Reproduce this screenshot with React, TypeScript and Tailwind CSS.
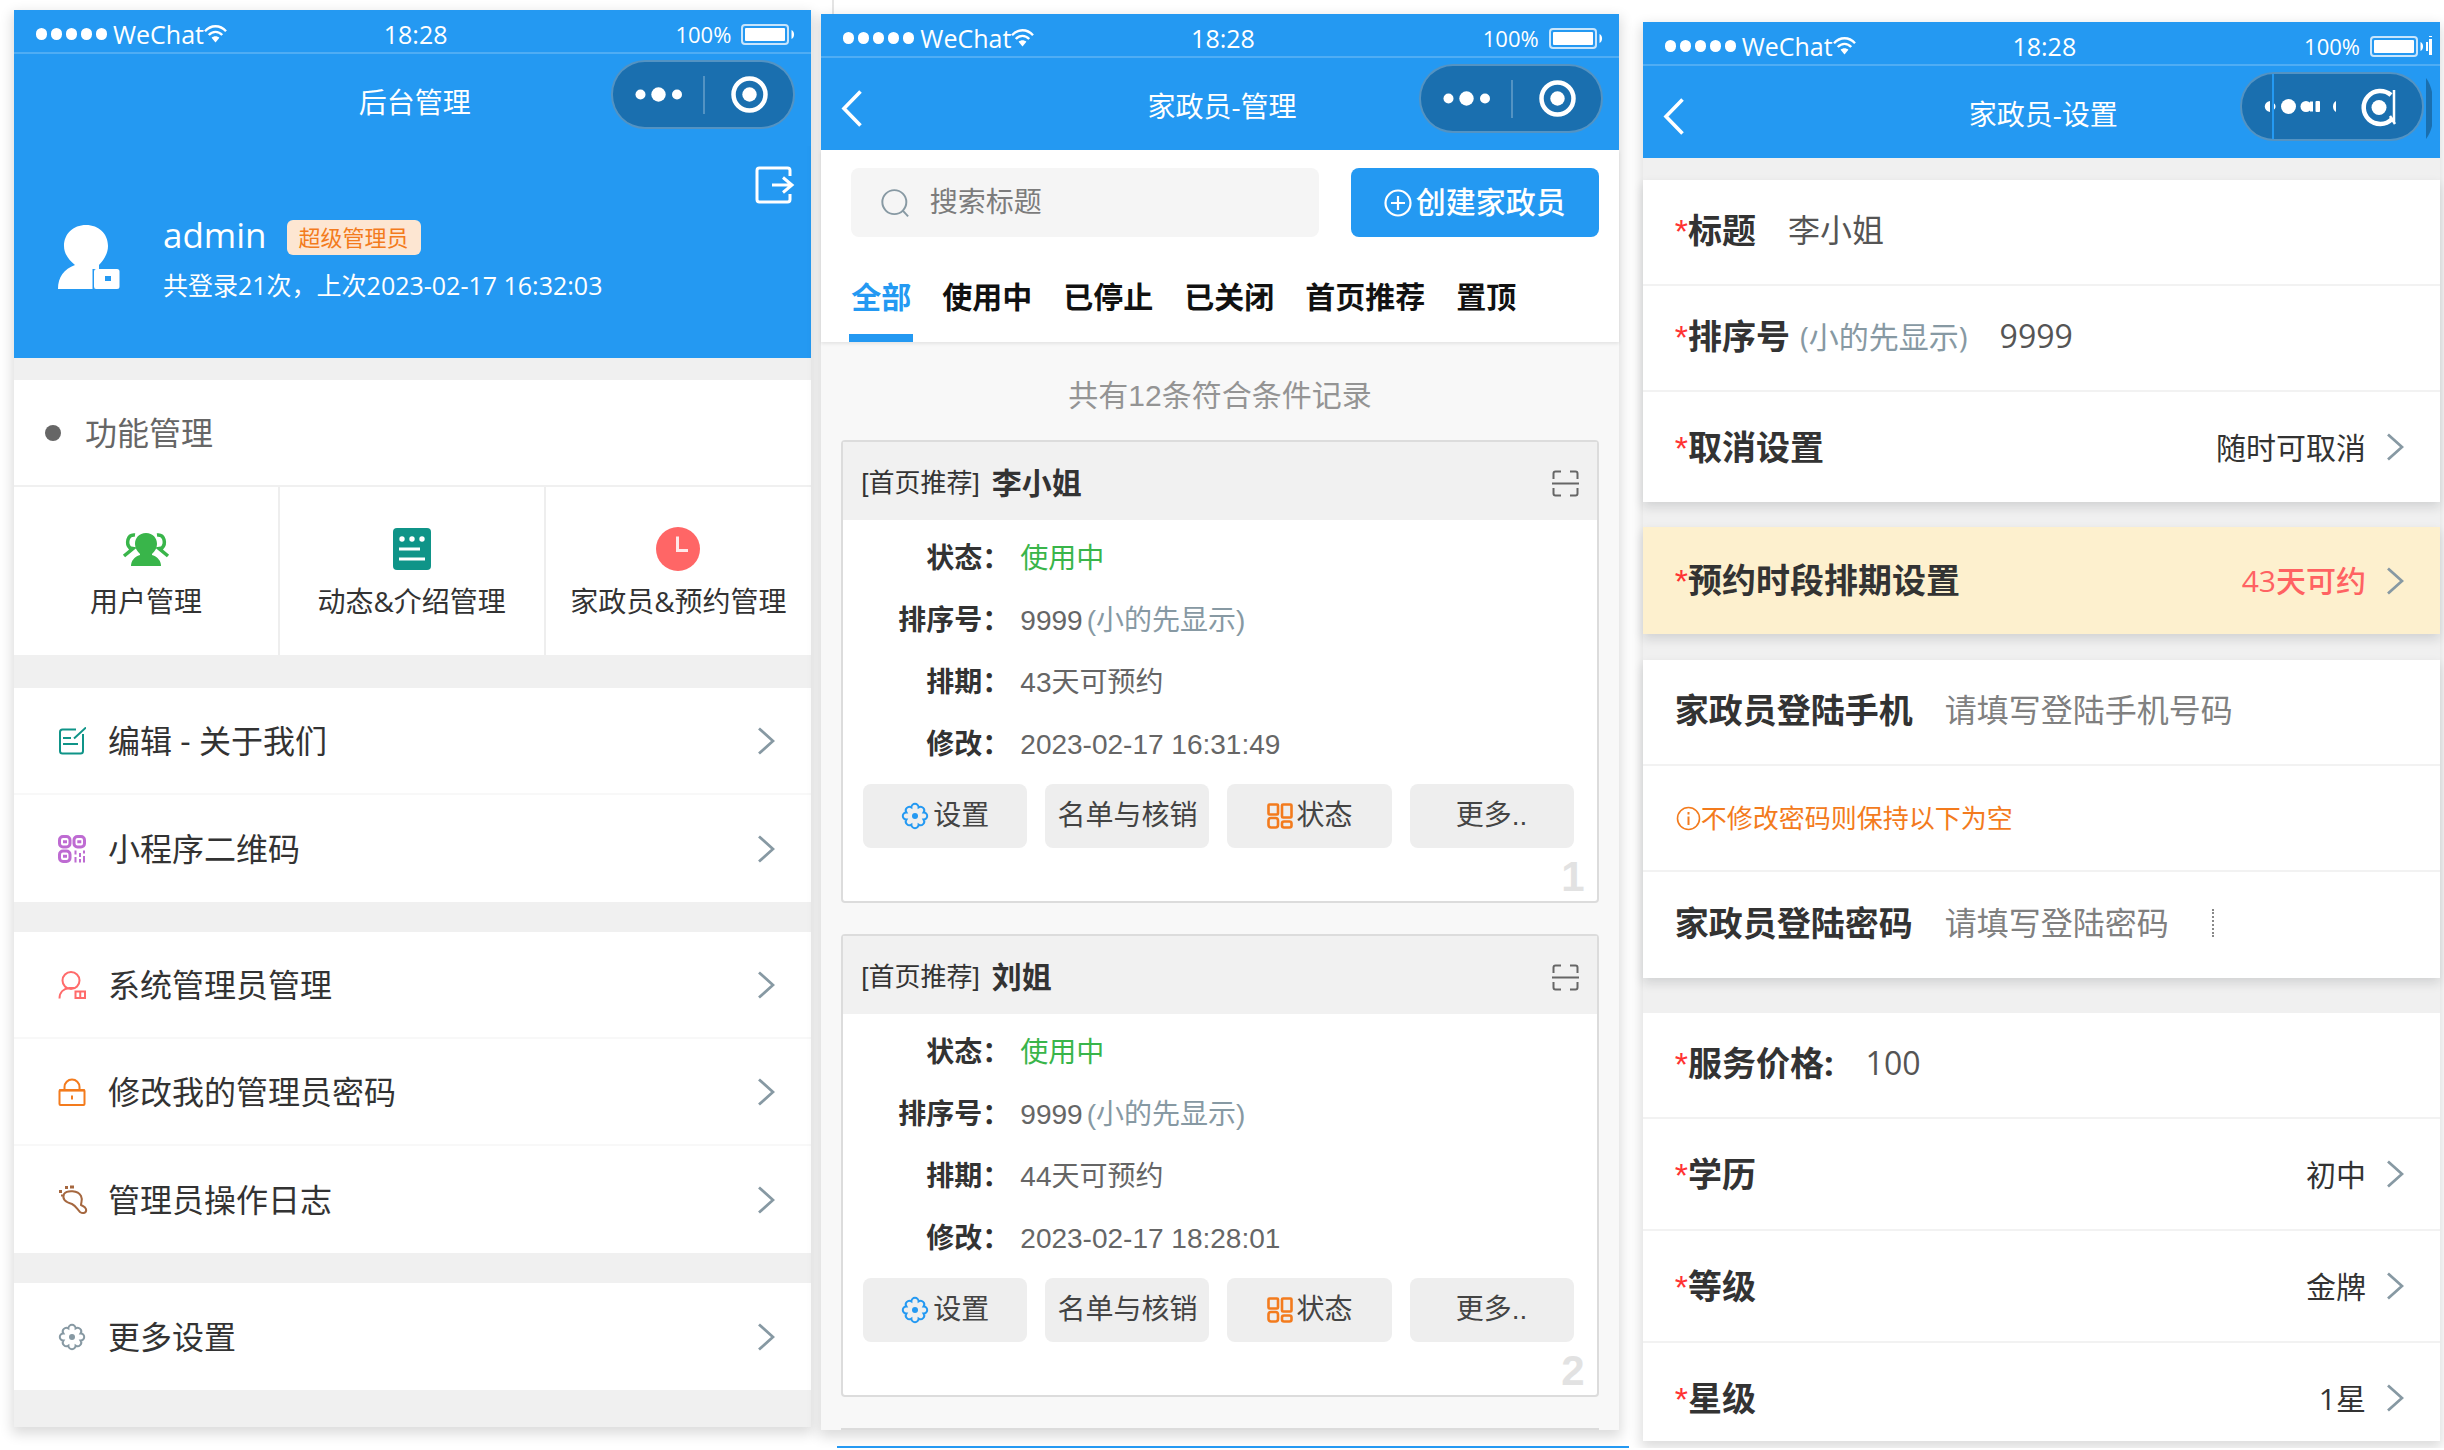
import { FC, ReactNode } from 'react'
import clsx from 'clsx'

const UI_FONT = `font-['Open_Sans','Noto_Sans_CJK_SC',sans-serif]`
const LIST_FONT = `font-['Liberation_Sans','Noto_Sans_CJK_SC',sans-serif]`

/* ---------- icons ---------- */

interface IIconProps {
  className?: string
}

const WifiIcon: FC = () => (
  <svg className="h-[18px] w-[23px]" viewBox="0 0 23 18" fill="none" stroke="currentColor" strokeWidth="2.4">
    <path d="M1 6.2C7-.4 16-.4 22 6.2" />
    <path d="M4.8 10C8.6 5.8 14.4 5.8 18.2 10" />
    <path d="M11.5 17.5 7.6 12.8c2.2-2 5.6-2 7.8 0z" fill="currentColor" stroke="none" />
  </svg>
)

const BatteryIcon: FC = () => (
  <svg className="h-[21px] w-[54px]" viewBox="0 0 54 21">
    <rect x="1" y="1" width="46" height="19" rx="3" fill="none" stroke="currentColor" strokeOpacity=".75" strokeWidth="2" />
    <rect x="4" y="4" width="40" height="13" rx="1" fill="currentColor" />
    <path d="M50.5 6c3.4 1 3.4 8 0 9z" fill="currentColor" />
  </svg>
)

const ChevronRight: FC = () => (
  <svg className="h-7 w-[18px] shrink-0 text-[#8799a3]" viewBox="0 0 18 28" fill="none" stroke="currentColor" strokeWidth="2.8">
    <path d="M2 1.5 16 14 2 26.5" />
  </svg>
)

const BackIcon: FC = () => (
  <svg className="h-[37px] w-[21px]" viewBox="0 0 21 37" fill="none" stroke="currentColor" strokeWidth="3.6">
    <path d="M19.5 1.5 3 18.5l16.5 17" />
  </svg>
)

const ExitIcon: FC = () => (
  <svg className="h-[38px] w-10" viewBox="0 0 40 38" fill="none" stroke="currentColor" strokeWidth="3">
    <path d="M35 10V4.5Q35 2 32.5 2h-28Q2 2 2 4.5v29Q2 36 4.5 36h28q2.5 0 2.5-2.500V28" />
    <path d="M17 19h20M28 11.5 37 19l-9 7.5" />
  </svg>
)

const AvatarIcon: FC = () => (
  <svg className="h-16 w-[63px]" viewBox="0 0 63 64" fill="currentColor">
    <path d="M29 0c13 0 22 9 22 21 0 8-5 15-9 19v4h-6.5v20H1c0-12 6-20 17-24C12 35 7 29 7 21 7 9 16 0 29 0z" />
    <path fillRule="evenodd" d="M39 44h21q2.5 0 2.5 2.5v15Q62.5 64 60 64H39q-2 0-2-2.500v-15q0-2.500 2-2.500zm9 7v5h6v-5z" />
  </svg>
)

const GearIcon: FC<IIconProps> = ({ className }) => (
  <svg className={className} viewBox="0 0 28 28" fill="none" stroke="currentColor" strokeWidth="2">
    <path d="M22.6 17.6A3.6 3.6 0 0 1 17.6 22.6 3.6 3.6 0 0 1 10.4 22.6 3.6 3.6 0 0 1 5.4 17.6 3.6 3.6 0 0 1 5.4 10.4 3.6 3.6 0 0 1 10.4 5.4 3.6 3.6 0 0 1 17.6 5.4 3.6 3.6 0 0 1 22.6 10.4 3.6 3.6 0 0 1 22.6 17.6z" />
    <circle cx="14" cy="14" r="3" fill="currentColor" stroke="none" />
  </svg>
)

const GridIcon: FC = () => (
  <svg className="h-[26px] w-[26px] text-[#f37b1d]" viewBox="0 0 26 26" fill="none" stroke="currentColor" strokeWidth="2.6">
    <rect x="1.5" y="1.5" width="9.5" height="10" rx="1" />
    <rect x="15" y="1.5" width="9.5" height="13" rx="1" />
    <rect x="1.5" y="15" width="9.5" height="9.5" rx="2.5" />
    <rect x="15" y="18.5" width="9.5" height="6" rx="2" />
  </svg>
)

const ScanIcon: FC = () => (
  <svg className="h-[27px] w-[27px] text-[#666]" viewBox="0 0 27 27" fill="none" stroke="currentColor" strokeWidth="2">
    <path d="M1.5 9V3.5q0-2 2-2H9M18 1.5h5.5q2 0 2 2V9M1.5 18v5.5q0 2 2 2H9M18 25.5h5.5q2 0 2-2V18M0 13.5h27" />
  </svg>
)

const SearchIcon: FC = () => (
  <svg className="h-8 w-8 text-[#8799a3]" viewBox="0 0 32 32" fill="none" stroke="currentColor" strokeWidth="2.2">
    <circle cx="15" cy="15" r="13.5" />
    <path d="m24.5 24.5 6 6.5" />
  </svg>
)

const PlusCircleIcon: FC = () => (
  <svg className="h-7 w-7" viewBox="0 0 28 28" fill="none" stroke="currentColor" strokeWidth="2.2">
    <circle cx="14" cy="14" r="12.5" />
    <path d="M14 7v14M7 14h14" />
  </svg>
)

const InfoIcon: FC = () => (
  <svg className="h-[25px] w-[25px]" viewBox="0 0 25 25" fill="none" stroke="currentColor" strokeWidth="1.6">
    <circle cx="12.5" cy="12.5" r="11" />
    <path d="M12.5 10.5V19M12.5 6v2.5" strokeWidth="2" />
  </svg>
)

const UsersIcon: FC = () => (
  <svg className="h-11 w-12 text-[#39b54a]" viewBox="0 0 48 44" fill="none" stroke="currentColor" strokeWidth="3.5">
    <path d="M24 6c7 0 11 5 11 11 0 4-2 7-5 10v1c6 2 9 6 9 11H9c0-5 3-9 9-11v-1c-3-3-5-6-5-10 0-6 4-11 11-11z" fill="currentColor" stroke="none" />
    <path d="M13 8C5 7 4 17 8 21l3 .5L2 29M35 8c8-1 9 9 5 13l-3 .5L46 29" />
  </svg>
)

const FormIcon: FC = () => (
  <svg className="h-11 w-10" viewBox="0 0 40 44">
    <rect x="1" y="1" width="38" height="42" rx="4" fill="#0f9488" />
    <g fill="#fff">
      <circle cx="10" cy="12" r="2.7" />
      <circle cx="20" cy="12" r="2.7" />
      <circle cx="30" cy="12" r="2.7" />
      <rect x="7" y="20.5" width="21" height="3" />
      <rect x="7" y="30.5" width="26" height="3" />
    </g>
  </svg>
)

const ClockIcon: FC = () => (
  <svg className="h-11 w-11" viewBox="0 0 44 44">
    <circle cx="22" cy="22" r="22" fill="#ff6666" />
    <path d="M21.5 9.5V23.5H32" fill="none" stroke="#fff" strokeOpacity=".85" strokeWidth="3" />
  </svg>
)

const EditIcon: FC = () => (
  <svg className="h-7 w-7 text-[#0f9488]" viewBox="0 0 28 28" fill="none" stroke="currentColor" strokeWidth="2">
    <path d="M18 2.5H4.5Q2 2.5 2 5v19q0 2.5 2.5 2.500h18q2.500 0 2.500-2.500V7M5 11h8M5 17h15M16 11.5 28 .5" />
  </svg>
)

const QrIcon: FC = () => (
  <svg className="h-7 w-7 text-[#a32cbf]" viewBox="0 0 28 28" fill="none" stroke="currentColor" strokeOpacity=".7" strokeWidth="3">
    <rect x="1.5" y="1.5" width="10.5" height="10.5" rx="3.5" />
    <rect x="16" y="1.5" width="10.5" height="10.5" rx="3.5" />
    <rect x="1.5" y="16" width="10.5" height="10.5" rx="3.5" />
    <path d="M5 6.75h4M19.300 6.75h4M5 21.25h4" />
    <path d="M17.5 15.5v4M17.5 22v5.5M22 18v4M22 24v3.5M26 15.5v3M26 21v6.5" strokeWidth="2" />
  </svg>
)

const AdminIcon: FC = () => (
  <svg className="h-7 w-7 text-[#ff6b6b]" viewBox="0 0 28 28" fill="none" stroke="currentColor" strokeWidth="2">
    <circle cx="13" cy="9.5" r="8.5" />
    <path d="M1.500 27.5c0-6 4-10 10-10.500h5" />
    <rect x="17.5" y="20.5" width="9.5" height="6.5" />
    <path d="M22.25 20.5V27" />
  </svg>
)

const LockIcon: FC = () => (
  <svg className="h-7 w-7 text-[#f37b1d]" viewBox="0 0 28 28" fill="none" stroke="currentColor" strokeWidth="2">
    <rect x="1.5" y="12" width="25" height="15" rx="1" />
    <path d="M6.5 12V9a7.5 7.5 0 0 1 15 0v3M14 17.5v4" />
    <path d="M1 12.5h26" strokeWidth="3" strokeOpacity=".6" />
  </svg>
)

const FootprintIcon: FC = () => (
  <svg className="h-[30px] w-[30px] text-[#a5673f]" viewBox="0 0 30 30" fill="none" stroke="currentColor" strokeWidth="2">
    <path d="M6 9c3-4 14-4 17 2 2 4 0 6 0 9 1 1 4 1 5 4 1 4-3 5-6 3-3-3-4-6-8-8C7 17 4 14 6 9z" />
    <path d="M1 6.5h3M4.5 9.5v2M7 2.5h3M12 2h4" strokeWidth="3" />
  </svg>
)

/* ---------- phone chrome ---------- */

const Capsule: FC = () => (
  <button
    type="button"
    aria-label="更多"
    className="mt-1.5 h-[69px] w-[184px] justify-self-end rounded-[34px] border-2 border-white/25 bg-[#1a6faf]"
  >
    <svg className="h-[65px] w-[180px]" viewBox="0 0 180 65" fill="#fff">
      <circle cx="27.5" cy="32.5" r="5" />
      <circle cx="45.5" cy="32.5" r="7.2" />
      <circle cx="64" cy="32.5" r="5" />
      <rect x="90" y="14" width="2" height="38" fillOpacity=".25" />
      <circle cx="136.500" cy="32.5" r="16" fill="none" stroke="#fff" strokeWidth="4.5" />
      <circle cx="136.500" cy="32.5" r="7.2" />
    </svg>
  </button>
)

// The settings page shows the capsule with its seams visible
const SeamedCapsule: FC = () => (
  <button
    type="button"
    aria-label="更多"
    className="mt-1.5 h-[69px] w-[184px] justify-self-end rounded-[34px] border-2 border-white/25 bg-[#1a6faf]"
  >
    <svg className="h-[65px] w-[180px]" viewBox="0 0 180 65" fill="#fff">
      <rect x="30" y="0" width="2" height="65" fill="#2499f2" />
      <path d="M28 27v11c-7-1-7-10 0-11zM32 29.5c2 1 2 5 0 6z" />
      <circle cx="46.5" cy="32.5" r="7.5" />
      <circle cx="64" cy="32.5" r="5.5" />
      <rect x="68" y="27.500" width="3" height="10" />
      <rect x="73.5" y="27" width="4.500" height="11" rx="1" />
      <path d="M94 27v11c-4-2-4-9 0-11z" />
      <path d="M149 21a16.500 16.500 0 1 0 1 24" fill="none" stroke="#fff" strokeWidth="4.5" />
      <path d="M152 16v32M148 42l5 8" fill="none" stroke="#fff" strokeWidth="2.5" />
      <circle cx="137" cy="33.5" r="7.5" />
    </svg>
  </button>
)

interface IPhoneHeaderProps {
  title: string
  back?: boolean
  seamed?: boolean
}

const PhoneHeader: FC<IPhoneHeaderProps> = ({ title, back, seamed }) => (
  <header className={clsx(`relative bg-[#2499f2] text-white`, UI_FONT)}>
    <div className="grid h-11 grid-cols-[1fr_auto_1fr] items-center border-b-2 border-white/20 pt-1.5 pr-4 pl-[22px]">
      <div className="flex items-center">
        <span className="flex gap-1 pr-1.5">
          {[0, 1, 2, 3, 4].map((dot) => (
            <i key={dot} className="block h-3 w-[11px] rounded-full bg-white" />
          ))}
        </span>
        <span className="text-[25px] leading-8">WeChat</span>
        <WifiIcon />
      </div>
      <span className="text-[25px] leading-8">18:28</span>
      <div className="flex items-center justify-end gap-2.5">
        <span className="text-[22px] leading-8">100%</span>
        <BatteryIcon />
      </div>
    </div>
    <div className="grid h-[92px] grid-cols-[1fr_auto_1fr] items-start pr-4 pl-5">
      {back ? (
        <button type="button" aria-label="返回" className="mt-8 w-fit">
          <BackIcon />
        </button>
      ) : (
        <span />
      )}
      <h1 className="mt-7 text-[28px] leading-10">{title}</h1>
      {seamed ? <SeamedCapsule /> : <Capsule />}
    </div>
    {seamed && (
      <svg className="absolute top-3.5 right-2 h-[104px] w-1.5" viewBox="0 0 6 104">
        <path d="M0 6h2v9H0zM3 3h3v16H3zM3 0h3v1H3z" fill="#fff" />
        <path d="M0 42q4 5 6 14v34q-2 8-6 13z" fill="#1a6faf" />
      </svg>
    )}
  </header>
)

interface IPhoneProps {
  className?: string
  children: ReactNode
}

const Phone: FC<IPhoneProps> = ({ className, children }) => (
  <section className={clsx(`shadow-[0_5px_12px_2px_rgba(0,0,0,0.14)]`, className)}>{children}</section>
)

/* ---------- admin home ---------- */

const tiles = [
  { label: `用户管理`, icon: <UsersIcon /> },
  { label: `动态&介绍管理`, icon: <FormIcon /> },
  { label: `家政员&预约管理`, icon: <ClockIcon /> },
]

const menuGroups = [
  [
    { label: `编辑 - 关于我们`, icon: <EditIcon /> },
    { label: `小程序二维码`, icon: <QrIcon /> },
  ],
  [
    { label: `系统管理员管理`, icon: <AdminIcon /> },
    { label: `修改我的管理员密码`, icon: <LockIcon /> },
    { label: `管理员操作日志`, icon: <FootprintIcon /> },
  ],
  [{ label: `更多设置`, icon: <GearIcon className="h-7 w-7 text-[#8799a3]" /> }],
]

const AdminHome: FC = () => (
  <Phone className={clsx(`mt-2.5 bg-[#f0f0f0] pb-[37px]`, UI_FONT)}>
    <PhoneHeader title="后台管理" />
    <div className="bg-[#2499f2] pt-5 pr-4 pb-[54px] pl-[43px] text-white">
      <div className="flex justify-end">
        <button type="button" aria-label="退出">
          <ExitIcon />
        </button>
      </div>
      <div className="mt-1.5 flex items-center gap-[43px]">
        <AvatarIcon />
        <div>
          <div className="flex items-center gap-5">
            <span className="text-[35px] leading-[50px]">admin</span>
            <span className="mt-1 rounded-md bg-[#fde6d2] px-3 text-[22px] leading-[35px] text-[#f37b1d]">
              超级管理员
            </span>
          </div>
          <p className="mt-1.5 text-[25px] leading-[38px]">共登录21次，上次2023-02-17 16:32:03</p>
        </div>
      </div>
    </div>

    <div className="mt-[22px] bg-white">
      <h2 className="flex h-[107px] items-center gap-6 border-b-2 border-[#f0f0f0] pl-[31px] text-[32px] text-[#666]">
        <i className="block h-4 w-4 rounded-full bg-[#666]" />
        功能管理
      </h2>
      <div className="grid h-[168px] grid-cols-3 divide-x-2 divide-[#eee]">
        {tiles.map(({ label, icon }) => (
          <button
            key={label}
            type="button"
            className="flex flex-col items-center pt-10 text-[28px] whitespace-nowrap text-[#333]"
          >
            {icon}
            <span className="mt-2.5 leading-10">{label}</span>
          </button>
        ))}
      </div>
    </div>

    <nav className="mt-[33px] flex flex-col gap-[30px]">
      {menuGroups.map((group) => (
        <div key={group[0].label} className="divide-y-2 divide-[#f8f8f8] bg-white">
          {group.map(({ label, icon }) => (
            <a
              key={label}
              href="#"
              className="flex h-[107px] items-center pr-9 pl-11 text-[32px] text-[#333]"
            >
              <span className="w-[50px]">{icon}</span>
              <span className="flex-1">{label}</span>
              <ChevronRight />
            </a>
          ))}
        </div>
      ))}
    </nav>
  </Phone>
)

/* ---------- housekeeper list ---------- */

const tabs = [`全部`, `使用中`, `已停止`, `已关闭`, `首页推荐`, `置顶`]

const housekeepers = [
  { name: `李小姐`, days: `43天可预约`, updated: `2023-02-17 16:31:49` },
  { name: `刘姐`, days: `44天可预约`, updated: `2023-02-17 18:28:01` },
]

interface IFieldProps {
  label: string
  children: ReactNode
}

const Field: FC<IFieldProps> = ({ label, children }) => (
  <div className="flex h-[62px] items-center gap-2.5">
    <dt className="w-[167px] text-right font-bold text-[#333]">{label}：</dt>
    <dd className="text-[#666]">{children}</dd>
  </div>
)

const CardButton: FC<{ children: ReactNode }> = ({ children }) => (
  <button
    type="button"
    className="flex h-16 flex-1 items-center justify-center gap-1 rounded-lg bg-[#eee] text-[28px] whitespace-nowrap text-[#444]"
  >
    {children}
  </button>
)

const HousekeeperList: FC = () => (
  <div className={LIST_FONT}>
    <div className="ml-[11px] h-3.5 border-l-2 border-[#e4e4e4]" />
    <Phone className="bg-[#f8f8f8]">
      <PhoneHeader title="家政员-管理" back />
      <div className="bg-white shadow-[0_2px_3px_rgba(0,0,0,0.08)]">
        <div className="flex gap-8 pt-[18px] pr-5 pl-[30px]">
          <label className="flex h-[69px] flex-1 items-center gap-5 rounded-lg bg-[#f5f5f5] pl-[30px]">
            <SearchIcon />
            <input
              type="text"
              aria-label="搜索标题"
              placeholder="搜索标题"
              className="w-full min-w-0 bg-transparent text-[28px] outline-none placeholder:text-[#7c7c7c]"
            />
          </label>
          <button
            type="button"
            className="flex h-[69px] w-[248px] items-center justify-center gap-1 rounded-lg bg-[#2499f2] text-[30px] font-medium whitespace-nowrap text-white"
          >
            <PlusCircleIcon />
            创建家政员
          </button>
        </div>
        <div className="flex gap-[27px] pt-9 pl-7">
          {tabs.map((tab, index) => (
            <button
              key={tab}
              type="button"
              className={clsx(
                `h-[69px] border-b-8 px-0.5 pb-3 text-[30px] leading-[49px] font-bold whitespace-nowrap`,
                index === 0 ? `border-[#2499f2] text-[#2499f2]` : `border-transparent text-[#111]`
              )}
            >
              {tab}
            </button>
          ))}
        </div>
      </div>

      <p className="pt-[31px] pb-[22px] text-center text-[30px] leading-[45px] text-[#949494]">
        共有12条符合条件记录
      </p>

      <div className="flex flex-col gap-[31px] px-5">
        {housekeepers.map(({ name, days, updated }, index) => (
          <article key={name} className="rounded border-2 border-[#dcdcdc] bg-white">
            <div className="flex h-[78px] items-center bg-[#f1f1f1] pt-1 pr-[18px] pl-[18px] text-[#333]">
              <span className="text-[26px]">[首页推荐]</span>
              <h3 className="ml-3 flex-1 text-[30px] font-bold">{name}</h3>
              <button type="button" aria-label="扫码">
                <ScanIcon />
              </button>
            </div>
            <dl className="pt-2 text-[28px]">
              <Field label="状态">
                <span className="text-[#39b54a]">使用中</span>
              </Field>
              <Field label="排序号">
                9999<span className="ml-1 text-[#8799a3]">(小的先显示)</span>
              </Field>
              <Field label="排期">{days}</Field>
              <Field label="修改">{updated}</Field>
            </dl>
            <div className="mt-2 flex gap-[18px] pr-[23px] pl-5">
              <CardButton>
                <GearIcon className="h-7 w-7 text-[#2499f2]" />
                设置
              </CardButton>
              <CardButton>名单与核销</CardButton>
              <CardButton>
                <GridIcon />
                状态
              </CardButton>
              <CardButton>更多..</CardButton>
            </div>
            <p className="h-[53px] pr-3 text-right text-[42px] leading-[58px] font-bold text-[#e2e2e2]">
              {index + 1}
            </p>
          </article>
        ))}
        <div className="h-0.5 bg-[#dcdcdc]" />
      </div>
    </Phone>
    <div className="mt-4 mr-[-10px] ml-4 h-0.5 bg-[#2499f2]" />
  </div>
)

/* ---------- housekeeper settings ---------- */

const GROUP = `divide-y-2 divide-[#f2f2f2] bg-white`
const GROUP_SHADOW = `shadow-[0_5px_10px_rgba(26,36,46,0.14)]`

interface IRowLabelProps {
  label: string
  required?: boolean
}

const RowLabel: FC<IRowLabelProps> = ({ label, required }) => (
  <span className="text-[34px] leading-[50px] font-bold whitespace-nowrap text-[#333]">
    {required && <span className="font-['Liberation_Sans'] font-normal text-[#f33]">*</span>}
    {label}
  </span>
)

interface IInputRowProps extends IRowLabelProps {
  type?: string
  hint?: string
  value?: string
  placeholder?: string
  suffix?: ReactNode
}

const InputRow: FC<IInputRowProps> = ({ label, required, type = `text`, hint, value, placeholder, suffix }) => (
  <label className="flex h-[106px] items-center pb-1 pl-8">
    <RowLabel label={label} required={required} />
    {hint && <span className="ml-2.5 text-[30px] whitespace-nowrap text-[#8799a3]">{hint}</span>}
    <input
      type={type}
      defaultValue={value}
      placeholder={placeholder}
      className={clsx(
        `ml-8 min-w-0 bg-transparent text-[32px] text-[#555] outline-none placeholder:text-[#808080]`,
        suffix ? `w-[267px]` : `flex-1`
      )}
    />
    {suffix}
  </label>
)

interface IPickerRowProps extends IRowLabelProps {
  value: string
  className?: string
  valueClassName?: string
}

const PickerRow: FC<IPickerRowProps> = ({
  label,
  required,
  value,
  className = `h-[110px]`,
  valueClassName = `text-[#333]`,
}) => (
  <button type="button" className={clsx(`flex w-full items-center pr-9 pl-8 text-left`, className)}>
    <RowLabel label={label} required={required} />
    <span className={clsx(`mr-5 flex-1 text-right text-[30px]`, valueClassName)}>{value}</span>
    <ChevronRight />
  </button>
)

const HousekeeperSettings: FC = () => (
  <Phone className={clsx(`mt-[22px] bg-[#f0f0f0]`, UI_FONT)}>
    <PhoneHeader title="家政员-设置" back seamed />
    <form className="flex flex-col pt-[22px]">
      <div className={clsx(GROUP, GROUP_SHADOW)}>
        <InputRow label="标题" required value="李小姐" />
        <InputRow label="排序号" required hint="(小的先显示)" value="9999" />
        <PickerRow label="取消设置" required value="随时可取消" />
      </div>
      <div className={clsx(`mt-[25px] bg-[#fdf0ce]`, GROUP_SHADOW)}>
        <PickerRow
          label="预约时段排期设置"
          required
          value="43天可约"
          className="h-[107px]"
          valueClassName="font-medium text-[#ff6262]"
        />
      </div>
      <div className={clsx(`mt-[26px]`, GROUP, GROUP_SHADOW)}>
        <InputRow label="家政员登陆手机" placeholder="请填写登陆手机号码" />
        <p className="flex h-[106px] items-center pl-[33px] text-[26px] text-[#f37b1d]">
          <InfoIcon />
          不修改密码则保持以下为空
        </p>
        <InputRow
          label="家政员登陆密码"
          type="password"
          placeholder="请填写登陆密码"
          suffix={<i className="h-7 border-l-2 border-dotted border-[#888]" />}
        />
      </div>
      <div className={clsx(`mt-[35px]`, GROUP)}>
        <InputRow label="服务价格:" required value="100" />
        <PickerRow label="学历" required value="初中" className="h-[112px]" />
        <PickerRow label="等级" required value="金牌" className="h-[112px]" />
        <PickerRow label="星级" required value="1星" className="h-[98px] pt-3" />
      </div>
    </form>
  </Phone>
)

export default function App() {
  return (
    <main className="flex items-start overflow-hidden bg-white pr-1 pl-3.5">
      <div className="min-w-0 flex-1">
        <AdminHome />
      </div>
      <div className="ml-2.5 min-w-0 flex-1">
        <HousekeeperList />
      </div>
      <div className="ml-6 min-w-0 flex-1">
        <HousekeeperSettings />
      </div>
    </main>
  )
}
